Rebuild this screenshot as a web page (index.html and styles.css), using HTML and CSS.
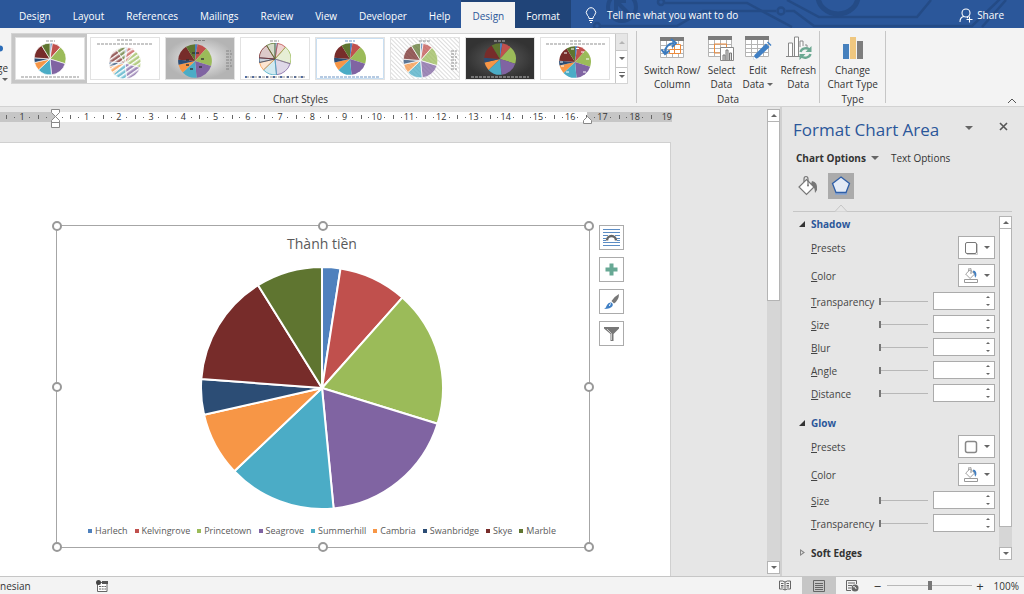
FILE: index.html
```
<!DOCTYPE html>
<html lang="en">
<head>
<meta charset="utf-8">
<meta name="viewport" content="width=device-width, initial-scale=1">
<title>Document editor</title>
<link rel="stylesheet" href="styles.css">
</head>
<body>
<svg class="defs" aria-hidden="true">
  <symbol id="pie" viewBox="-121 -121 242 242">
    <g class="slices">
      <path class="s1" d="M0 0V-120A120 120 0 0 1 18.4 -118.6Z"/>
      <path class="s2" d="M0 0L18.4 -118.6A120 120 0 0 1 79.7 -89.7Z"/>
      <path class="s3" d="M0 0L79.7 -89.7A120 120 0 0 1 114.6 35.5Z"/>
      <path class="s4" d="M0 0L114.6 35.5A120 120 0 0 1 11.5 119.4Z"/>
      <path class="s5" d="M0 0L11.5 119.4A120 120 0 0 1 -87 82.6Z"/>
      <path class="s6" d="M0 0L-87 82.6A120 120 0 0 1 -117 26.6Z"/>
      <path class="s7" d="M0 0L-117 26.6A120 120 0 0 1 -119.7 -9Z"/>
      <path class="s8" d="M0 0L-119.7 -9A120 120 0 0 1 -63.4 -101.9Z"/>
      <path class="s9" d="M0 0L-63.4 -101.9A120 120 0 0 1 0 -120Z"/>
    </g>
  </symbol>
  <symbol id="bucket" viewBox="0 0 22 22">
    <path d="M15 6q6 1 5 9l-2 3q0-6-4-9z" fill="var(--pour,#777)"/>
    <path d="M9.500 4.500L17 12l-7.500 7.500L2 12z" fill="#fff" stroke="#777" stroke-width="1.200"/>
    <path d="M7 7V4q0-2.500 2-2.500T11 4v6" fill="none" stroke="#777" stroke-width="1.200"/>
    <circle cx="11" cy="10.500" r="1" fill="#777"/>
  </symbol>
  <symbol id="grid" viewBox="0 0 26 24">
    <path d="M1 1h24v21H1z" fill="#fff"/>
    <path d="M1.500 5v16.500h23V5M1 9.500h24M1 13.500h24M1 17.500h24M7.500 5v17M13.500 5v17M19.500 5v17" fill="none" stroke="#b4b4b4"/>
    <path d="M1 1h24v4H1z" fill="#7b7b7b"/>
  </symbol>
  <pattern id="stripes" width="4" height="4" patternUnits="userSpaceOnUse" patternTransform="rotate(-35)"><path d="M0 0h4v1.500H0z" fill="#fff"/></pattern>
  <pattern id="hatch" width="3" height="3" patternUnits="userSpaceOnUse" patternTransform="rotate(45)"><path d="M0 0h3v1H0z" fill="#dcdcdc"/></pattern>
  <radialGradient id="silver"><stop offset="0" stop-color="#f4f4f4"/><stop offset="1" stop-color="#b4b4b4"/></radialGradient>
  <radialGradient id="coal"><stop offset="0" stop-color="#5e5e5e"/><stop offset="1" stop-color="#333"/></radialGradient>
</svg>

<header class="titlebar">
  <svg class="circuit" viewBox="0 0 474 28" aria-hidden="true">
    <g fill="none" stroke="#244b86" stroke-width="2.500">
      <circle cx="72" cy="7" r="14" stroke-width="4"/><path d="M79 14L67 2M66 11V1h10" stroke-width="4"/>
      <circle cx="111" cy="2" r="3"/><path d="M115 3h82l45 24"/>
      <circle cx="47" cy="26" r="3"/><path d="M50 26h77l26-15h73M236 11h8l20 15h158l28-27M237 0l32 17h98l14-17M432 27l24-27"/>
      <circle cx="231" cy="11" r="3.500"/><path d="M268-4a20 18 0 0 0 40 0" stroke-width="5"/>
    </g>
  </svg>
  <nav class="tabs">
    <a href="#">Design</a><a href="#">Layout</a><a href="#">References</a><a href="#">Mailings</a><a href="#">Review</a><a href="#">View</a><a href="#">Developer</a><a href="#">Help</a><span class="context"><a href="#" class="active">Design</a><a href="#">Format</a></span>
  </nav>
  <button class="tell"><svg width="12" height="16" viewBox="0 0 12 16" fill="none" stroke="#fff"><path d="M4 11.500Q4 9.500 2.500 8.500A4.600 4.600 0 1 1 9.500 8.500Q8 9.500 8 11.500zM4 13.500h4M5 15.500h2"/></svg>Tell me what you want to do</button>
  <button class="share"><svg width="14" height="15" viewBox="0 0 14 15" fill="none" stroke="#fff" stroke-width="1.100"><circle cx="7" cy="5" r="4"/><path d="M1 14q0-5 4-5.500M8 9l1 1M10.500 8.500v6M7.500 11.500h6"/></svg>Share</button>
</header>

<section class="ribbon">
  <div class="cut"><svg width="4" height="9" viewBox="0 0 4 9" aria-hidden="true"><circle cx="0" cy="4.500" r="3" fill="#2b6cb8"/></svg><span>ge</span><i class="down"></i></div>
  <div class="group styles">
    <div class="gallery">
      <div class="thumbs">
        <button class="thumb selected" aria-label="Style 1"><svg viewBox="0 0 68 41"><path d="M0 0h68v41H0z" fill="#fff"/><use href="#pie" x="18" y="5" width="32" height="32"/><path class="tx" d="M30 3h9M5 39h58"/></svg></button>
        <button class="thumb" aria-label="Style 2"><svg viewBox="0 0 68 41"><path d="M0 0h68v41H0z" fill="#fff"/><use class="soft" href="#pie" x="18" y="9" width="32" height="32"/><circle cx="34" cy="25" r="16" fill="url(#stripes)"/><path class="tx" d="M26 2h16M6 6h56"/></svg></button>
        <button class="thumb" aria-label="Style 3"><svg viewBox="0 0 68 41"><path d="M0 0h68v41H0z" fill="url(#silver)"/><use class="tight" href="#pie" x="12" y="6" width="34" height="34"/><path class="tx" d="M28 2.500h12M60 13h5M60 16h6M60 19h5M60 22h6M60 25h5M60 28h6M60 31h4"/><path class="lbl" d="M26 15h8M35 21h4M33 29h4M24 31h4M20 27h3M20 22h3"/></svg></button>
        <button class="thumb" aria-label="Style 4"><svg viewBox="0 0 68 41"><path d="M0 0h68v41H0z" fill="#fff"/><use class="outline" href="#pie" x="18" y="5" width="32" height="32"/><path class="tx" d="M29 3h9"/><path class="leg" d="M4 39h60"/><path class="tx" d="M5 39h60"/></svg></button>
        <button class="thumb" aria-label="Style 5"><svg viewBox="0 0 68 41"><path d="M.5.500h67v40H.5z" fill="#fff" stroke="#c9dff2"/><use class="tight" href="#pie" x="18" y="5" width="32" height="32"/><path class="tx blue" d="M29 3h10M4 39h60"/></svg></button>
        <button class="thumb" aria-label="Style 6"><svg viewBox="0 0 68 41"><path d="M0 0h68v41H0z" fill="#fff"/><path d="M0 0h68v41H0z" fill="url(#hatch)"/><use class="soft" href="#pie" x="12" y="5" width="35" height="35"/><path class="tx" d="M28 3h12M60 13h6M60 16h5M60 19h6M60 22h5M60 25h6M60 28h5M60 31h6"/></svg></button>
        <button class="thumb" aria-label="Style 7"><svg viewBox="0 0 68 41"><path d="M0 0h68v41H0z" fill="url(#coal)"/><use class="tight" href="#pie" x="18" y="5" width="32" height="32"/><path class="tx pale" d="M28 3h12M5 39h58"/></svg></button>
        <button class="thumb" aria-label="Style 8"><svg viewBox="0 0 68 41"><path d="M0 0h68v41H0z" fill="#fff"/><use class="tight" href="#pie" x="18" y="8" width="32" height="32"/><path class="tx" d="M29 3h11M5 6h60"/><path d="M35 10.500h3M40 14h3M45 21h3M42 34h3M25 34h3M20 28h3M19 24h3M23 15h3M30 11h3" stroke="#fff"/></svg></button>
      </div>
      <div class="stepper">
        <button class="off" aria-label="Scroll up"><i class="up"></i></button>
        <button aria-label="Scroll down"><i class="down"></i></button>
        <button aria-label="More styles"><b></b><i class="down"></i></button>
      </div>
    </div>
    <div class="caption">Chart Styles</div>
  </div>
  <div class="group data">
    <div class="tools">
      <button><svg width="26" height="24" viewBox="0 0 26 24"><use href="#grid" width="26" height="24"/><path d="M10.500 17.500v-4h5v-5h6v9zM15.500 13.500h6M15.500 13.500v4" fill="#fff" stroke="#ed8b3c"/><path d="M6 17q0-9 9-10" fill="none" stroke="#3b7bbf" stroke-width="2"/><path d="M12 3l5 4-4 4M2.500 13.500L6 18l4.500-3.500" fill="none" stroke="#3b7bbf" stroke-width="2"/></svg>Switch Row/<br>Column</button>
      <button><svg width="28" height="26" viewBox="0 0 28 26"><use href="#grid" width="26" height="24"/><path d="M7.500 9h12v9h-12z" fill="none" stroke="#ed8b3c"/><path d="M13.500 12.500h13v13h-13z" fill="#fff" stroke="#888"/><path d="M16 25v-5h2v5M19 25V15h2v10M22.500 25v-7h2v7" fill="#ddd" stroke="#777"/></svg>Select<br>Data</button>
      <button><svg width="28" height="26" viewBox="0 0 28 26"><use href="#grid" width="26" height="24"/><path d="M9 25l1.500-5L22 8.500l3.500 3.500L14 23z" fill="#3f7fc4"/><path d="M23 7.500l1-1 3.500 3.500-1 1z" fill="#3f7fc4"/><path d="M9 25l1-3.500 2.500 2.500z" fill="#fff"/></svg>Edit<br>Data<i class="down"></i></button>
      <button><svg width="27" height="26" viewBox="0 0 27 26"><path d="M1 21.500h14M3.500 21V8h4v13M9.500 21V2h4v19M15 12V6h3v5M20 10h2v3" fill="#fff" stroke="#888"/><g fill="none" stroke="#6ca892" stroke-width="2.400"><path d="M15.500 17a5.500 5 0 0 1 9.500-2M25.500 19a5.500 5 0 0 1-9.500 2"/></g><path d="M26.500 11v6h-6zM14.500 25v-6h6z" fill="#6ca892"/></svg>Refresh<br>Data</button>
    </div>
    <div class="caption">Data</div>
  </div>
  <div class="group type">
    <div class="tools">
      <button><svg width="22" height="24" viewBox="0 0 22 24"><path d="M1 8h6v15H1z" fill="#4680bd"/><path d="M8 1h6v22H8z" fill="#efc77f"/><path d="M15 5h6v18h-6z" fill="#7d7d7d"/></svg>Change<br>Chart Type</button>
    </div>
    <div class="caption">Type</div>
  </div>
  <button class="collapse" aria-label="Collapse ribbon"><svg width="10" height="6" viewBox="0 0 10 6"><path d="M1 5l4-4 4 4" fill="none" stroke="#555"/></svg></button>
</section>

<main class="work">
  <section class="doc">
    <div class="canvas">
      <div class="ruler">
        <ol><li>1</li><li></li><li>1</li><li>2</li><li>3</li><li>4</li><li>5</li><li>6</li><li>7</li><li>8</li><li>9</li><li>10</li><li>11</li><li>12</li><li>13</li><li>14</li><li>15</li><li>16</li><li>17</li><li>18</li><li>19</li></ol>
        <svg class="marker first" width="9" height="20" viewBox="0 0 9 20" fill="#fff" stroke="#888"><path d="M.5 .5h8v3l-4 4-4-4zM.5 13.500v-2l4-4 4 4v2zM.5 13.500h8v5h-8z"/></svg>
        <svg class="marker last" width="9" height="8" viewBox="0 0 9 8" fill="#fff" stroke="#888"><path d="M.5 7.500v-3l4-4 4 4v3z"/></svg>
      </div>
      <article class="page">
        <figure class="chart">
          <figcaption>Thành tiền</figcaption>
          <svg class="plot" role="img" aria-label="Pie chart"><use href="#pie"/></svg>
          <ul class="legend"><li class="s1">Harlech</li><li class="s2">Kelvingrove</li><li class="s3">Princetown</li><li class="s4">Seagrove</li><li class="s5">Summerhill</li><li class="s6">Cambria</li><li class="s7">Swanbridge</li><li class="s8">Skye</li><li class="s9">Marble</li></ul>
          <i class="h l t"></i><i class="h c t"></i><i class="h r t"></i><i class="h l m"></i><i class="h r m"></i><i class="h l b"></i><i class="h c b"></i><i class="h r b"></i>
        </figure>
        <div class="side">
          <button aria-label="Layout options"><svg width="17" height="17" viewBox="0 0 17 17"><path d="M0 .5h17M0 3.500h17M0 6.500h5M12 6.500h5M0 9.500h3M14 9.500h3M0 11.500h3M14 11.500h3M0 13.500h17M0 16.500h17" stroke="#5b8cc4"/><path d="M4 11.500a4.500 4.500 0 0 1 9 0" fill="none" stroke="#666" stroke-width="2.500"/></svg></button>
          <button aria-label="Chart elements"><svg width="13" height="13" viewBox="0 0 13 13"><path d="M4.500.500h4v4h4v4h-4v4h-4v-4h-4v-4h4z" fill="#67a894"/></svg></button>
          <button aria-label="Chart styles"><svg width="17" height="16" viewBox="0 0 17 16"><path d="M16 0q-4 2-7.500 7l2.500 2.500Q16 6 16 0z" fill="#777"/><path d="M7.500 7.500l3 3" stroke="#fff"/><path d="M1 15q2-1 3-4 1.500-3 4-2.500 2.500 1 1.500 3.500-2 3-8.500 3z" fill="#3f7fc4"/><path d="M6.500 12q0-2 1.500-2.500" stroke="#fff" fill="none"/></svg></button>
          <button aria-label="Chart filters"><svg width="17" height="15" viewBox="0 0 17 15"><path d="M1 1h15v1.500L10.500 8v7h-3V8L1 2.500z" fill="#777"/><path d="M4 3l4.500 4.500V14" fill="none" stroke="#ddd" stroke-width=".8"/></svg></button>
        </div>
      </article>
    </div>
    <div class="scroll"><button aria-label="Up"><i class="up"></i></button><span class="bar"></span><button aria-label="Down"><i class="down"></i></button></div>
  </section>

  <aside class="pane">
    <div class="pane-head"><h2>Format Chart Area</h2><button aria-label="Pane options"><i class="down big"></i></button><button aria-label="Close"><svg width="9" height="9" viewBox="0 0 9 9"><path d="M1 1l7 7M8 1L1 8" stroke="#555" stroke-width="1.600"/></svg></button></div>
    <div class="switch"><button class="on">Chart Options<i class="down big"></i></button><button>Text Options</button></div>
    <div class="kinds">
      <button aria-label="Fill and line"><svg width="22" height="22"><use href="#bucket"/></svg></button>
      <button class="on" aria-label="Effects"><svg width="20" height="22" viewBox="0 0 20 22"><path d="M4 17h12v3H4z" fill="#8ea6cb"/><path d="M10 2l8.500 6.500-3.500 9H5L1.500 8.500z" fill="#e4ebf6" stroke="#2f5fa8" stroke-width="1.300"/></svg></button>
      <svg class="notch" width="12" height="8" viewBox="0 0 12 8"><path d="M0 7.500L6 1l6 6.500" fill="#e6e6e6" stroke="#c6c6c6"/></svg>
    </div>
    <div class="pane-body">
      <form class="props">
        <h3 class="open">Shadow</h3>
        <div class="row tall"><label for="sp"><u>P</u>resets</label><button type="button" id="sp"><svg width="14" height="14" viewBox="0 0 14 14"><rect x="1.500" y="1.500" width="11" height="11" rx="1.500" fill="#fff" stroke="#777"/><path d="M3 13.500h10.500V3" fill="none" stroke="#ccc"/></svg><i class="down"></i></button></div>
        <div class="row tall"><label for="sc"><u>C</u>olor</label><button type="button" id="sc"><svg class="paint" width="14" height="15" viewBox="0 0 14 15"><use href="#bucket" x="0" y="-1" width="14" height="13"/><path d="M.5 11.500h13v3H.5z" fill="#fff" stroke="#999"/></svg><i class="down"></i></button></div>
        <div class="row"><label for="st"><u>T</u>ransparency</label><input type="range" value="0" aria-label="Transparency slider"><span class="spin"><input id="st" type="text"><i class="up"></i><i class="down"></i></span></div>
        <div class="row"><label for="ss"><u>S</u>ize</label><input type="range" value="0" aria-label="Size slider"><span class="spin"><input id="ss" type="text"><i class="up"></i><i class="down"></i></span></div>
        <div class="row"><label for="sb"><u>B</u>lur</label><input type="range" value="0" aria-label="Blur slider"><span class="spin"><input id="sb" type="text"><i class="up"></i><i class="down"></i></span></div>
        <div class="row"><label for="sa"><u>A</u>ngle</label><input type="range" value="0" aria-label="Angle slider"><span class="spin"><input id="sa" type="text"><i class="up"></i><i class="down"></i></span></div>
        <div class="row"><label for="sd"><u>D</u>istance</label><input type="range" value="0" aria-label="Distance slider"><span class="spin"><input id="sd" type="text"><i class="up"></i><i class="down"></i></span></div>
        <h3 class="open">Glow</h3>
        <div class="row tall"><label for="gp"><u>P</u>resets</label><button type="button" id="gp"><svg width="14" height="14" viewBox="0 0 14 14"><rect x="1.500" y="1.500" width="11" height="11" rx="2" fill="#fff" stroke="#888" stroke-width="1.500"/></svg><i class="down"></i></button></div>
        <div class="row tall"><label for="gc"><u>C</u>olor</label><button type="button" id="gc"><svg class="paint" width="14" height="15" viewBox="0 0 14 15"><use href="#bucket" x="0" y="-1" width="14" height="13"/><path d="M.5 11.500h13v3H.5z" fill="#fff" stroke="#999"/></svg><i class="down"></i></button></div>
        <div class="row"><label for="gs"><u>S</u>ize</label><input type="range" value="0" aria-label="Glow size slider"><span class="spin"><input id="gs" type="text"><i class="up"></i><i class="down"></i></span></div>
        <div class="row"><label for="gt"><u>T</u>ransparency</label><input type="range" value="0" aria-label="Glow transparency slider"><span class="spin"><input id="gt" type="text"><i class="up"></i><i class="down"></i></span></div>
        <h3 class="closed">Soft Edges</h3>
      </form>
      <div class="scroll"><button aria-label="Up"><i class="up"></i></button><span class="bar"></span><button aria-label="Down"><i class="down"></i></button></div>
    </div>
  </aside>
</main>

<footer class="status">
  <span class="lang">nesian</span>
  <svg class="macro" width="12" height="12" viewBox="0 0 12 12"><path d="M1.500 2.500h9.500v9H1.500z" fill="#fff" stroke="#666"/><path d="M6 1h6v3H6z" fill="#555"/><circle cx="2.500" cy="2.500" r="2.500" fill="#444"/><path d="M3 6.500h7M3 9h7" stroke="#666" stroke-dasharray="2 .7"/></svg>
  <div class="views">
    <button aria-label="Read mode"><svg width="12" height="11" viewBox="0 0 12 11"><path d="M6 2Q4 .5.500 1v8Q4 8.500 6 10q2-1.500 5.500-1V1Q8 .5 6 2zv8M2 3.500h2.500M2 5.500h2.500M2 7h2.500M7.500 3.500H10M7.500 5.500H10M7.500 7H10" fill="none" stroke="#666"/></svg></button>
    <button class="on" aria-label="Print layout"><svg width="12" height="12" viewBox="0 0 12 12"><path d="M.5.500h11v11H.5zM2 3.500h8M2 5.500h8M2 7.500h8M2 9.500h8" fill="none" stroke="#666"/></svg></button>
    <button aria-label="Web layout"><svg width="13" height="12" viewBox="0 0 13 12"><path d="M5 10.500H.5V.5h10V4M2 3h7M2 5.500h4M2 8h3" fill="none" stroke="#666"/><circle cx="9" cy="8" r="3.500" fill="#666"/><path d="M7 7q1-1 2 0t1 2" stroke="#eee" fill="none"/></svg></button>
  </div>
  <div class="zoom"><button aria-label="Zoom out">−</button><input type="range" aria-label="Zoom"><button aria-label="Zoom in">+</button><span>100%</span></div>
</footer>
</body>
</html>
```
FILE: styles.css
```
* { box-sizing: border-box; }
body {
  margin: 0;
  height: 100vh;
  display: flex;
  flex-direction: column;
  overflow: hidden;
  background: #e6e6e6;
  color: #333;
  font: 10px/14px "Open Sans", "Noto Sans", sans-serif;
}
button, input { font: inherit; color: inherit; margin: 0; }
button { padding: 0; border: 0; background: none; }
svg { display: block; }
ol, ul, figure, h2, h3 { margin: 0; padding: 0; list-style: none; }
.defs { position: absolute; width: 0; height: 0; }

.up, .down { display: inline-block; border: 3px solid transparent; }
.down { border-top: 3px solid #666; border-bottom: 0; }
.up { border-bottom: 3px solid #666; border-top: 0; }
.big { border-width: 4px; border-bottom: 0; }

/* chart palette */
.s1 { color: #4f81bd; }
.s2 { color: #c0504d; }
.s3 { color: #9bbb59; }
.s4 { color: #8064a2; }
.s5 { color: #4bacc6; }
.s6 { color: #f79646; }
.s7 { color: #2c4d75; }
.s8 { color: #772c2a; }
.s9 { color: #5f7530; }
.slices path {
  fill: currentColor;
  fill-opacity: var(--fade, 1);
  stroke: var(--edge, #fff);
  stroke-width: var(--edge-width, 2px);
  stroke-linejoin: round;
}

/* title bar */
.titlebar { position: relative; display: flex; height: 28px; flex: none; background: #2b579a; color: #fff; }
.circuit { position: absolute; right: 0; top: 0; width: 474px; height: 28px; }
.tabs { position: relative; display: flex; padding-left: 8px; }
.tabs a { display: flex; align-items: center; padding: 4px 11px 0; color: #fff; text-decoration: none; }
.context { display: flex; padding-top: 2px; background: #204478; }
.tabs .context a { padding-top: 2px; }
.tabs .active { background: #f3f3f3; color: #2b579a; }
.tell, .share { position: relative; display: flex; align-items: center; gap: 10px; padding-top: 2px; }
.tell { margin-left: 14px; }
.share { margin: 0 20px 0 auto; gap: 4px; }

/* ribbon */
.ribbon { position: relative; display: flex; height: 79px; flex: none; padding: 3px 0; background: #f3f3f3; border-bottom: 1px solid #d2d2d2; }
.cut { width: 11px; display: flex; flex-direction: column; padding-top: 13px; }
.cut span { margin: 8px 0 3px -3px; }
.cut .down { align-self: flex-end; margin-right: 3px; }
.group { display: flex; flex-direction: column; justify-content: space-between; border-right: 1px solid #c6c6c6; }
.caption { text-align: center; line-height: 14px; margin-bottom: -3px; }
.styles { padding-right: 8px; }
.styles .caption { padding-right: 38px; }
.gallery { display: flex; margin-top: 2px; background: #fff; border: 1px solid #d4d4d4; }
.thumbs { display: flex; padding-right: 3px; }
.thumb { padding: 4px 3px 4px 4px; border: 0; }
.thumb svg { width: 68px; height: 41px; outline: 1px solid #e2e2e2; }
.selected { background: #c6c6c6; }
.tx { stroke: #777; stroke-width: 1; stroke-dasharray: 3 1; opacity: .8; fill: none; }
.pale { stroke: #ddd; }
.blue { stroke: #4a7ab5; }
.lbl { stroke: #333; stroke-width: 2; stroke-dasharray: 3 1; opacity: .7; }
.leg { stroke: #4a6aa8; stroke-width: 2; stroke-dasharray: 2 5; }
.thumb use { --edge-width: 5px; }
.thumb .tight { --edge: none; }
.thumb .soft { --fade: .75; }
.thumb .outline { --fade: .25; --edge: currentColor; --edge-width: 6px; }
.stepper { display: grid; grid-template-rows: repeat(3, 1fr); width: 12px; border-left: 1px solid #c6c6c6; }
.stepper button { display: grid; place-content: center; gap: 2px; }
.stepper button + button { border-top: 1px solid #c6c6c6; }
.stepper b { height: 1px; background: #666; }
.stepper .off { background: #e6e6e6; }
.off .up { border-bottom-color: #b5b5b5; }
.tools { display: flex; justify-content: center; gap: 7px; padding: 4px 3px 0 7px; }
.tools button { display: block; text-align: center; white-space: nowrap; }
.tools svg { height: 26px; margin: 0 auto 2px; }
.tools .down { margin: 0 0 2px 3px; }
.type { width: 66px; }
.type .tools { padding: 4px 0 0; }
.collapse { position: absolute; right: 7px; bottom: 2px; }

/* document */
.work { flex: 1; display: flex; min-height: 0; }
.doc { flex: 1; display: flex; min-width: 0; border-right: 2px solid #d0d0d0; }
.canvas { flex: 1; min-width: 0; display: flex; flex-direction: column; }
.ruler {
  position: relative;
  flex: none;
  height: 10px;
  margin: 5px 0 20px;
  padding-left: 6px;
  font-size: 9px;
  background: linear-gradient(90deg, #c6c6c6 55px, #fff 55px 587px, #c6c6c6 587px 672px, transparent 672px);
}
.ruler ol { display: grid; grid-template-columns: repeat(21, 1fr); width: 677px; line-height: 10px; text-align: center; }
.ruler li {
  height: 10px;
  background:
    linear-gradient(#666, #666) 0 50% / 1px 4px no-repeat,
    linear-gradient(#666, #666) 25% 50% / 1px 1px no-repeat,
    linear-gradient(#666, #666) 75% 50% / 1px 1px no-repeat;
}
.ruler li:last-child { background: linear-gradient(#666, #666) 0 50% / 1px 4px no-repeat; }
.marker { position: absolute; top: -3px; }
.first { left: 51px; }
.last { left: 583px; top: 4px; }
.page { flex: 1; display: flex; align-items: flex-start; gap: 9px; width: 671px; padding: 82px 0 0 56px; background: #fff; border: 1px solid #d0d0d0; border-width: 1px 1px 0 0; }
.chart { position: relative; display: flex; flex-direction: column; align-items: center; width: 534px; height: 323px; padding: 8px 2px 8px 0; border: 1px solid #a6a6a6; }
.chart figcaption { font-size: 14px; line-height: 20px; color: #595959; }
.plot { width: 244px; height: 244px; margin: 12px 0 14px; }
.legend { display: flex; gap: 7px; font-size: 9px; line-height: 14px; }
.legend li { display: flex; align-items: center; gap: 3px; -webkit-text-fill-color: #595959; }
.legend li::before { content: ""; width: 4px; height: 4px; background: currentColor; }
.h { position: absolute; width: 10px; height: 10px; margin: -5px; border: 2px solid #999; border-radius: 50%; background: #fff; }
.l { left: 0; } .c { left: 50%; } .r { right: 0; }
.t { top: 0; } .m { top: 50%; } .b { bottom: 0; }
.side { display: flex; flex-direction: column; gap: 7px; }
.side button { display: grid; place-items: center; width: 25px; height: 25px; background: #fff; border: 1px solid #ababab; }

.scroll { flex: none; display: flex; flex-direction: column; width: 13px; background: #d6d6d6; }
.scroll button { display: grid; place-content: center; height: 13px; background: #fff; border: 1px solid #b4b4b4; }
.scroll .bar { background: #fff; border: 1px solid #b4b4b4; border-width: 0 1px 1px; }
.scroll button:last-child { margin-top: auto; }
.doc .scroll { margin: 2px 0; }
.doc .bar { height: 179px; }

/* format pane */
.pane { flex: none; width: 242px; display: flex; flex-direction: column; padding: 0 12px 16px 11px; }
.pane-head { display: flex; align-items: center; height: 44px; gap: 26px; padding-right: 4px; }
.pane-head h2 { flex: 1; padding-top: 2px; font-size: 17px; line-height: 24px; font-weight: 400; color: #2b579a; white-space: nowrap; }
.pane-head button { margin-bottom: 6px; }
.switch { display: flex; gap: 12px; padding: 0 3px; height: 14px; }
.switch .on { font-weight: 700; }
.switch .big { margin: 0 0 2px 5px; }
.kinds { position: relative; display: flex; gap: 7px; height: 47px; padding: 8px 2px 0; border-bottom: 1px solid #c6c6c6; }
.kinds button { width: 26px; height: 26px; display: grid; place-items: center; }
.kinds .on { background: #ababab; }
.notch { position: absolute; left: 42px; bottom: -1px; }
.pane-body { flex: 1; display: flex; gap: 4px; padding-top: 4px; min-height: 0; }
.props { flex: 1; padding-left: 18px; }
.props h3 { position: relative; font-size: 10px; line-height: 16px; margin: 13px 0 4px; }
.props h3:first-child { margin-top: 0; }
.open { color: #2b579a; }
.open::before { content: ""; position: absolute; left: -12px; top: 5px; border: 3px solid; border-color: transparent #333 #333 transparent; }
.closed::before { content: ""; position: absolute; left: -11px; top: 4px; width: 5px; height: 7px; background: #888; clip-path: polygon(0 0, 100% 50%, 0 100%, 0 0, 1px 2px, 1px 5px, 3px 50%, 1px 2px); }
.row { display: flex; align-items: center; height: 18px; margin-bottom: 5px; }
.row label { flex: 1; padding-top: 1px; color: #444; }
.tall { height: 23px; }
.tall button { width: 37px; height: 23px; display: flex; align-items: center; justify-content: center; gap: 6px; background: #fff; border: 1px solid #ababab; }
.paint { --pour: #3f7fc4; }
input[type="range"] { appearance: none; width: 49px; height: 11px; background: linear-gradient(#b8b8b8, #b8b8b8) 0 50% / 100% 1px no-repeat; }
input[type="range"]::-webkit-slider-thumb { appearance: none; width: 2px; height: 7px; background: #777; }
.spin { display: grid; grid-template-columns: 1fr 12px; align-items: center; justify-items: center; width: 62px; height: 18px; margin-left: 5px; background: #fff; border: 1px solid #ababab; }
.spin input { grid-row: 1 / 3; width: 100%; height: 14px; padding: 0 2px; border: 0; background: none; min-width: 0; }
.spin i { border-width: 2px; grid-column: 2; }
.spin .up { border-top: 0; }
.spin .down { border-bottom: 0; }
.pane-body .bar { flex: 1; margin-bottom: 20px; }

/* status bar */
.status { flex: none; display: flex; align-items: center; height: 18px; background: #f3f3f3; border-top: 1px solid #c6c6c6; }
.lang { width: 96px; }
.views { display: flex; align-self: stretch; margin-left: auto; }
.views button { width: 34px; display: grid; place-items: center; }
.views .on { background: #c6c6c6; }
.zoom { display: flex; align-items: center; gap: 4px; padding: 0 5px 0 4px; }
.zoom button { font-size: 13px; line-height: 14px; }
.zoom input[type="range"] { width: 85px; margin-left: 2px; }
.zoom input[type="range"]::-webkit-slider-thumb { width: 4px; height: 9px; }
.zoom span { margin-left: 6px; }
```
